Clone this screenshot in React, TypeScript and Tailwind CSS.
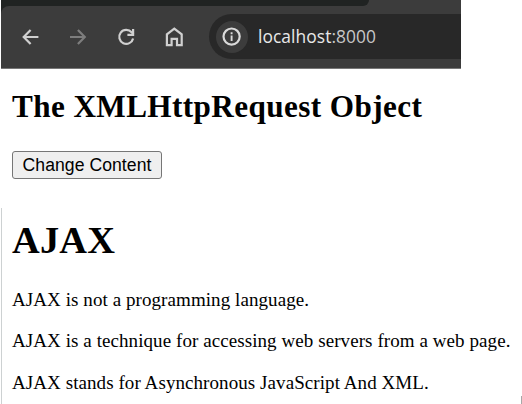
import React from "react";

function BackIcon() {
  return (
    <svg className="h-5 w-5" viewBox="0 0 20 20" fill="none" stroke="#d0d0d0" strokeWidth="2.2">
      <path d="M17.4 10H3M9.6 2.9L2.7 10L9.6 17.1" />
    </svg>
  );
}

function ForwardIcon() {
  return (
    <svg className="h-5 w-5" viewBox="0 0 20 20" fill="none" stroke="#7d7d7d" strokeWidth="2.2">
      <path d="M1 10H15.6M8.9 2.9L15.8 10L8.9 17.1" />
    </svg>
  );
}

function ReloadIcon() {
  return (
    <svg className="h-5 w-5" viewBox="0 0 20 20" fill="none" stroke="#d0d0d0" strokeWidth="2.2">
      <path d="M16.1 11.4A7 7 0 1 1 14.6 5.3L16.5 7.2" />
      <path d="M16.1 1.9V7.9H10.4" />
    </svg>
  );
}

function HomeIcon() {
  return (
    <svg className="h-5 w-5" viewBox="0 0 20 20" fill="none" stroke="#d0d0d0" strokeWidth="2.2">
      <path d="M1.9 18.2V7.4L9.3 1.7L16.7 7.4V18.2H12V11.8H6.6V18.2Z" />
    </svg>
  );
}

function InfoIcon() {
  return (
    <svg className="h-5 w-5" viewBox="0 0 20 20" fill="none" stroke="#dadada" strokeWidth="2.2">
      <circle cx="9.6" cy="9.6" r="8.1" />
      <path d="M9.6 8.6V14M9.6 5.2V7.2" strokeWidth="1.9" />
    </svg>
  );
}

function BrowserBar() {
  return (
    <header className="ml-px h-[69px] w-[460px] overflow-hidden border-b border-[#777777] bg-[#3c3c3c]">
      <div className="h-[6px] bg-[#3c3c3c]">
        <div className="h-[6px] w-[368px] rounded-br-[10px] bg-[#202322]" />
      </div>
      <div className="bg-[linear-gradient(#202322,#202322)] bg-[length:8px_8px] bg-no-repeat">
        <div className="flex h-[62px] items-start rounded-tl-[8px] bg-[#3c3c3c] pt-2">
          <nav className="flex h-[45px] items-center gap-7 pl-5">
            <BackIcon />
            <ForwardIcon />
            <ReloadIcon />
            <HomeIcon />
          </nav>
          <div className="ml-6 flex h-[45px] flex-1 items-center rounded-l-full bg-[#282828] pl-[7px]">
            <span className="flex h-8 w-8 items-center justify-center rounded-full bg-[#3c3c3c]">
              <InfoIcon />
            </span>
            <span className="ml-[10px] pb-0.5 font-['Open_Sans',sans-serif] text-[17.4px] leading-6 tracking-[0.06px] whitespace-nowrap text-[#e8e8e8]">
              localhost<span className="text-[#c7c7c7]">:8000</span>
            </span>
          </div>
        </div>
      </div>
    </header>
  );
}

export default function App() {
  return (
    <div className="flex h-[404px] w-[522px] flex-col overflow-hidden bg-white font-['Liberation_Serif',serif] text-black">
      <BrowserBar />
      <section className="h-[139px] pt-5 pl-3">
        <h2 className="text-[31.2px] leading-9 font-bold tracking-[0.4px] whitespace-nowrap">The XMLHttpRequest Object</h2>
        <button className="mt-[26px] flex h-7 w-[150px] items-center justify-center rounded-[3px] border border-[#767676] bg-[#efefef] font-['Liberation_Sans',sans-serif] text-[17.6px] leading-5 tracking-[0.05px] whitespace-nowrap">
          Change Content
        </button>
      </section>
      <section className="ml-px flex flex-1 border-l border-[#cdd1d2] pl-[10px]">
        <div className="flex-1">
          <h1 className="mt-[10px] text-[38.4px] leading-[44px] font-bold tracking-[0.2px]">AJAX</h1>
          <div className="mt-[27px] flex flex-col gap-[19.4px] text-[19px] leading-[22px] tracking-[0.075px] whitespace-nowrap">
            <p>AJAX is not a programming language.</p>
            <p>AJAX is a technique for accessing web servers from a web page.</p>
            <p>AJAX stands for Asynchronous JavaScript And XML.</p>
          </div>
        </div>
        <div className="h-2 w-px self-end bg-[#a8a8a8]" />
      </section>
    </div>
  );
}
